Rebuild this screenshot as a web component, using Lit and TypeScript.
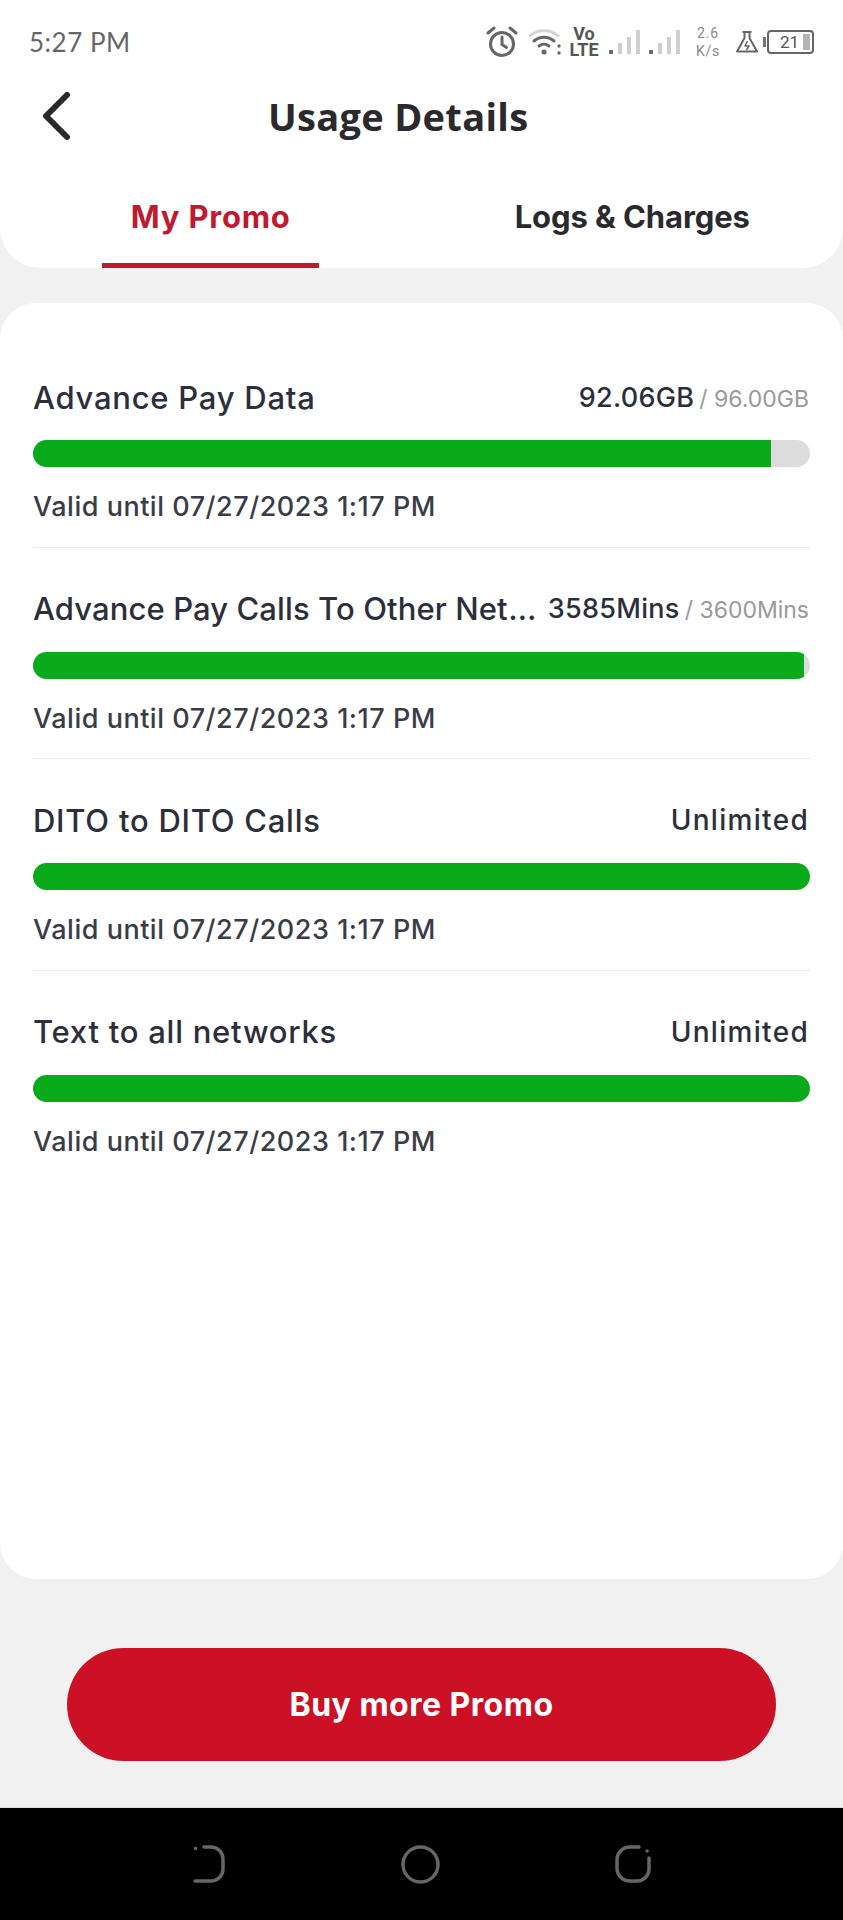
import { LitElement, html, css, svg } from 'lit';
import { customElement } from 'lit/decorators.js';
import { classMap } from 'lit/directives/class-map.js';

interface PromoRow {
  name: string;
  used?: string;
  total?: string;
  percent: number;
  tight?: boolean;
}

const rows: PromoRow[] = [
  { name: 'Advance Pay Data', used: '92.06GB', total: '96.00GB', percent: 95 },
  { name: 'Advance Pay Calls To Other Networks', used: '3585Mins', total: '3600Mins', percent: 99.2, tight: true },
  { name: 'DITO to DITO Calls', percent: 100 },
  { name: 'Text to all networks', percent: 100 },
];

const signalBars = (x: number) => svg`
  <rect x=${x} y="20" width="4" height="4" fill="#6a6a6a"></rect>
  <rect x=${x + 9} y="13" width="4" height="11" fill="#cfcfcf"></rect>
  <rect x=${x + 18} y="7" width="4" height="17" fill="#cfcfcf"></rect>
  <rect x=${x + 27} y="0" width="4" height="24" fill="#cfcfcf"></rect>
`;

@customElement('app-root')
export class AppRoot extends LitElement {
  static styles = css`
    :host {
      display: flex;
      flex-direction: column;
      height: 1920px;
      background: #f1f1f2;
      font-family: 'Inter', 'Liberation Sans', sans-serif;
      color: #2c2e3c;
    }

    .top {
      height: 268px;
      flex: none;
      background: #fff;
      border-radius: 0 0 40px 40px;
      display: flex;
      flex-direction: column;
    }

    .status {
      height: 76px;
      display: flex;
      align-items: center;
      padding: 8px 29px 0 29px;
      box-sizing: border-box;
      color: #666;
    }

    .time {
      font-family: 'Lato', sans-serif;
      font-size: 26px;
      letter-spacing: 0.5px;
      flex: 1;
    }

    .status-icons {
      display: flex;
      align-items: center;
    }

    .wifi {
      margin-left: 11px;
    }

    .volte {
      width: 30px;
      display: flex;
      flex-direction: column;
      align-items: center;
      font-family: 'Roboto', sans-serif;
      font-weight: 700;
      font-size: 18px;
      line-height: 16px;
      color: #555;
      margin: 0 8px 0 8px;
    }

    .speed {
      width: 22px;
      display: flex;
      flex-direction: column;
      align-items: center;
      font-family: 'Roboto', sans-serif;
      font-size: 14px;
      line-height: 18px;
      letter-spacing: 0.8px;
      color: #888;
      margin: 0 17px 0 16px;
    }

    .battery-nub {
      width: 3px;
      height: 10px;
      background: #777;
      margin-left: 5px;
    }

    .battery {
      width: 47px;
      height: 24px;
      box-sizing: border-box;
      border: 2px solid #666;
      border-radius: 4px;
      margin-left: 1px;
      display: flex;
      align-items: center;
      justify-content: flex-end;
      padding: 2px;
      gap: 4px;
      font-family: 'Roboto', sans-serif;
      font-size: 17px;
      color: #555;
    }

    .battery i {
      width: 7px;
      height: 16px;
      background: #b4b4b4;
    }

    .header {
      height: 80px;
      display: flex;
      align-items: center;
      padding-left: 42px;
    }

    .header svg {
      flex: none;
    }

    h1 {
      margin: 0 0 0 198px;
      font-family: 'Open Sans', sans-serif;
      font-size: 38px;
      font-weight: 700;
      letter-spacing: 0.3px;
      color: #2a2a2e;
    }

    .tabs {
      flex: 1;
      display: flex;
    }

    .tab {
      flex: 1;
      display: flex;
      flex-direction: column;
      align-items: center;
    }

    .tab span {
      height: 100%;
      display: flex;
      align-items: center;
      justify-content: center;
      font-size: 31px;
      font-weight: 700;
      letter-spacing: -0.1px;
      color: #2a2a2e;
      box-sizing: border-box;
      padding-top: 8px;
    }

    .tab.active span {
      width: 217px;
      color: #bf1a2f;
      letter-spacing: 0.8px;
      border-bottom: 5px solid #bf1a2f;
      padding-top: 16px;
      padding-bottom: 3px;
    }

    .card {
      flex: 1;
      margin-top: 35px;
      background: #fff;
      border-radius: 36px;
      padding: 33px 33px 0;
    }

    .row {
      height: 211.6px;
      box-sizing: border-box;
      padding-top: 43px;
      border-bottom: 1px solid #ececec;
    }

    .row:last-child {
      border-bottom: none;
    }

    .row-head {
      height: 36px;
      display: flex;
      align-items: center;
      justify-content: space-between;
      gap: 6px;
    }

    .name {
      font-size: 31px;
      font-weight: 500;
      letter-spacing: 0.75px;
      white-space: nowrap;
      overflow: hidden;
      text-overflow: ellipsis;
      min-width: 0;
    }

    .name.tight {
      letter-spacing: 0.1px;
    }

    .amount {
      flex: none;
      font-size: 27px;
      font-weight: 500;
      letter-spacing: 0.3px;
      margin-right: 1px;
      color: #2c2e3c;
    }

    .amount.unlimited {
      font-size: 28px;
      letter-spacing: 1.3px;
    }

    .amount small {
      margin-left: 5px;
      font-size: 23px;
      font-weight: 400;
      letter-spacing: 0;
      color: #999;
    }

    .bar {
      margin-top: 25px;
      height: 27px;
      border-radius: 14px;
      background: #dcdcdc;
      overflow: hidden;
    }

    .bar div {
      height: 100%;
      background: #0aab1a;
    }

    .valid {
      margin-top: 22px;
      height: 36px;
      line-height: 36px;
      font-size: 27px;
      font-weight: 500;
      letter-spacing: 0.52px;
      color: #3a3c48;
    }

    .footer {
      flex: none;
      height: 228px;
      display: flex;
      justify-content: center;
      padding-top: 69px;
      box-sizing: border-box;
    }

    .buy {
      width: 709px;
      height: 113px;
      border: none;
      border-radius: 57px;
      background: #cc1126;
      color: #fff;
      font-family: inherit;
      font-size: 32px;
      font-weight: 700;
      letter-spacing: 0.5px;
      padding: 0;
    }

    .nav {
      flex: none;
      height: 113px;
      background: #000;
      border-top: 1px solid #ddd;
      box-sizing: border-box;
      display: flex;
      align-items: center;
      justify-content: center;
      gap: 175px;
    }

    .nav svg {
      fill: none;
      stroke: #666;
      stroke-width: 3.5;
      stroke-linecap: round;
    }
  `;

  private renderStatus() {
    return html`
      <div class="status">
        <span class="time">5:27 PM</span>
        <div class="status-icons">
          <svg width="32" height="32" viewBox="0 0 32 32" fill="none" stroke="#666" stroke-width="3" stroke-linecap="round">
            <circle cx="16" cy="18" r="11.5"></circle>
            <path d="M16 11v7.5l4.5 3M2 7l6-5M30 7l-6-5"></path>
          </svg>
          <svg class="wifi" width="32" height="28" viewBox="0 0 32 28" fill="none" stroke-linecap="round">
            <path d="M1 8C8 1 22 1 29 8" stroke="#d5d5d5" stroke-width="3"></path>
            <path d="M5 13c6-5 14-5 20 0M10 18c3-2.5 7-2.5 10 0" stroke="#666" stroke-width="3"></path>
            <circle cx="15" cy="24" r="2.5" fill="#666"></circle>
            <circle cx="30" cy="18" r="1.7" fill="#666"></circle>
            <circle cx="30" cy="25" r="1.7" fill="#666"></circle>
          </svg>
          <div class="volte"><span>Vo</span><span>LTE</span></div>
          <svg width="74" height="24" viewBox="0 0 74 24">${signalBars(2)}${signalBars(42)}</svg>
          <div class="speed"><span>2.6</span><span>K/s</span></div>
          <svg width="22" height="22" viewBox="0 0 22 22" fill="none" stroke="#666" stroke-width="2" stroke-linejoin="round">
            <path d="M6.5 1h9M8.5 1v6L1 20.5h20L13.5 7V1"></path>
            <path d="M11.5 10l-2.5 5h4l-2.5 4" stroke-width="1.5"></path>
          </svg>
          <span class="battery-nub"></span>
          <div class="battery"><span>21</span><i></i></div>
        </div>
      </div>
    `;
  }

  private renderRow(row: PromoRow) {
    return html`
      <div class="row">
        <div class="row-head">
          <span class=${classMap({ name: true, tight: !!row.tight })}>${row.name}</span>
          ${row.total
            ? html`<span class="amount">${row.used}<small>/ ${row.total}</small></span>`
            : html`<span class="amount unlimited">Unlimited</span>`}
        </div>
        <div class="bar"><div style="width:${row.percent}%"></div></div>
        <div class="valid">Valid until 07/27/2023 1:17 PM</div>
      </div>
    `;
  }

  render() {
    return html`
      <div class="top">
        ${this.renderStatus()}
        <div class="header">
          <svg width="28" height="48" viewBox="0 0 28 48" fill="none" stroke="#2a2a2e" stroke-width="6" stroke-linecap="round" stroke-linejoin="round">
            <path d="M25 3L4 24l21 21"></path>
          </svg>
          <h1>Usage Details</h1>
        </div>
        <div class="tabs">
          <div class="tab active"><span>My Promo</span></div>
          <div class="tab"><span>Logs &amp; Charges</span></div>
        </div>
      </div>

      <div class="card">${rows.map((row) => this.renderRow(row))}</div>

      <div class="footer"><button class="buy">Buy more Promo</button></div>

      <div class="nav">
        <svg width="33" height="38" viewBox="0 0 33 38">
          <path d="M2.5 3.5h.1M11 2h7a12 12 0 0 1 12 12v10a12 12 0 0 1-12 12H2"></path>
        </svg>
        <svg width="39" height="39" viewBox="0 0 39 39"><circle cx="19.5" cy="19.5" r="17.5"></circle></svg>
        <svg width="36" height="38" viewBox="0 0 36 38">
          <path d="M24 2H15A13 13 0 0 0 2 15v8a13 13 0 0 0 13 13h7a12 12 0 0 0 12-12V13M32 6h.1"></path>
        </svg>
      </div>
    `;
  }
}
